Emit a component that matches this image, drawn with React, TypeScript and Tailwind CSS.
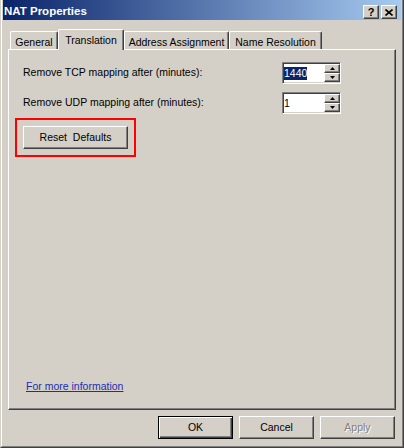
import React from "react";

const raised =
  "border border-t-white border-l-white border-r-[#404040] border-b-[#404040] shadow-[inset_-1px_-1px_0_#808080]";
const sunken =
  "border border-t-[#808080] border-l-[#808080] border-r-white border-b-white shadow-[inset_1px_1px_0_#404040,inset_-1px_-1px_0_#d4d0c8]";

function Arrow({ up }: { up?: boolean }) {
  return (
    <svg width="5" height="3" viewBox="0 0 5 3" className="block">
      {up ? <path d="M2.5 0 L5 3 L0 3 Z" fill="#000" /> : <path d="M0 0 L5 0 L2.5 3 Z" fill="#000" />}
    </svg>
  );
}

function Spin({ value, selected }: { value: string; selected?: boolean }) {
  return (
    <div className={`w-[59px] h-[22px] bg-white flex ${sunken}`}>
      <div className="flex-1 flex items-center pl-[1px]">
        <span className={selected ? "bg-[#0a246a] text-white leading-[13px]" : "leading-[13px]"}>{value}</span>
      </div>
      <div className="flex flex-col w-[16px] mt-[1px]">
        <div className={`h-[9px] bg-[#d4d0c8] flex items-center justify-center ${raised}`}>
          <Arrow up />
        </div>
        <div className={`h-[9px] bg-[#d4d0c8] flex items-center justify-center ${raised}`}>
          <Arrow />
        </div>
      </div>
    </div>
  );
}

function Tab({ label, w, active }: { label: string; w: string; active?: boolean }) {
  if (active) {
    return (
      <div
        className={`${w} h-[21px] -mb-px relative z-10 bg-[#d4d0c8] border-t border-l border-t-white border-l-white border-r border-r-[#404040] rounded-t-[2px] shadow-[inset_-1px_0_0_#808080] flex justify-center pt-[3px]`}
      >
        {label}
      </div>
    );
  }
  return (
    <div
      className={`${w} h-[18px] bg-[#d4d0c8] border-t border-l border-t-white border-l-white border-r border-r-[#404040] rounded-t-[2px] shadow-[inset_-1px_0_0_#808080] flex justify-center pt-[3px]`}
    >
      {label}
    </div>
  );
}

function Btn({ label, def, disabled }: { label: string; def?: boolean; disabled?: boolean }) {
  const cls = def
    ? "border border-black shadow-[inset_1px_1px_0_#fff,inset_-1px_-1px_0_#404040,inset_-2px_-2px_0_#808080]"
    : raised;
  return (
    <div className={`w-[75px] h-[23px] bg-[#d4d0c8] flex items-center justify-center ${cls}`}>
      <span className={disabled ? "text-[#808080] [text-shadow:1px_1px_0_#fff]" : ""}>{label}</span>
    </div>
  );
}

export default function App() {
  return (
    <div
      className="w-[404px] h-[448px] bg-[#d4d0c8] border border-t-0 border-l-[#d4d0c8] border-r-[#404040] border-b-[#404040] text-[10.5px] text-black"
      style={{ fontFamily: '"Liberation Sans", Arial, sans-serif' }}
    >
      <div className="h-full border-l border-l-white border-r border-r-[#808080] border-b border-b-[#808080] pl-px pr-px flex flex-col">
        {/* title bar */}
        <div className="h-[20px] bg-[linear-gradient(to_right,#0a246a,#a6caf0)] flex items-center justify-between pl-[1px] pr-[4px]">
          <span className="text-white font-bold text-[11.5px] pt-[3px]">NAT Properties</span>
          <div className="flex gap-[2px] mt-[4px]">
            <div className={`w-[16px] h-[14px] bg-[#d4d0c8] flex items-center justify-center font-bold text-[11px] leading-none ${raised}`}>
              ?
            </div>
            <div className={`w-[16px] h-[14px] bg-[#d4d0c8] flex items-center justify-center ${raised}`}>
              <svg width="8" height="7" viewBox="0 0 8 7">
                <path d="M0.5 0.5 L7.5 6.5 M7.5 0.5 L0.5 6.5" stroke="#000" strokeWidth="1.6" />
              </svg>
            </div>
          </div>
        </div>

        {/* tabs */}
        <div className="mt-[9px] mx-[5px] flex items-end h-[20px] pl-[2px]">
          <Tab label="General" w="w-[48px]" />
          <Tab label="Translation" w="w-[66px]" active />
          <Tab label="Address Assignment" w="w-[105px]" />
          <Tab label="Name Resolution" w="w-[93px]" />
        </div>

        {/* panel */}
        <div className="mx-[5px] h-[361px] border border-t-white border-l-white border-r-[#404040] border-b-[#404040] shadow-[inset_-1px_-1px_0_#808080] flex flex-col pl-[14px] pt-[12px] pb-[14px]">
          <div className="grid grid-cols-[259px_59px] items-center">
            <span>Remove TCP mapping after (minutes):</span>
            <Spin value="1440" selected />
          </div>
          <div className="grid grid-cols-[259px_59px] items-center mt-[8px]">
            <span>Remove UDP mapping after (minutes):</span>
            <Spin value="1" />
          </div>
          <div className="mt-[4px] -ml-[8px] w-fit border-2 border-[#ff0000] p-[6px]">
            <div className={`w-[105px] h-[23px] bg-[#d4d0c8] flex items-center justify-center whitespace-pre ${raised}`}>
              {"Reset  Defaults"}
            </div>
          </div>
          <div className="mt-auto pl-[3px]">
            <span className="text-[#1a2fb0] underline">For more information</span>
          </div>
        </div>

        {/* buttons */}
        <div className="flex justify-end gap-[6px] mt-[6px] pr-[6px]">
          <Btn label="OK" def />
          <Btn label="Cancel" />
          <Btn label="Apply" disabled />
        </div>
      </div>
    </div>
  );
}
